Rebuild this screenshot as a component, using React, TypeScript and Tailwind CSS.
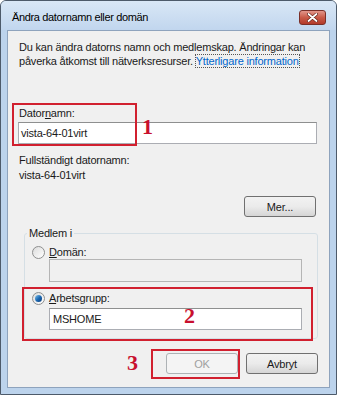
import React from "react";

const font = { fontFamily: '"Liberation Sans", Arial, sans-serif' };

function Radio({ checked }: { checked?: boolean }) {
  return (
    <div className="w-[13px] h-[13px] rounded-full border border-[#8e8f8f] bg-gradient-to-br from-[#dcdcdc] to-[#ffffff] flex items-center justify-center shrink-0">
      {checked && (
        <div className="w-[7px] h-[7px] rounded-full bg-gradient-to-br from-[#7fc4ea] via-[#1c6ab4] to-[#0d3d7a]" />
      )}
    </div>
  );
}

export default function App() {
  return (
    <div
      className="w-[337px] h-[395px] relative bg-[#bcd3ec] border border-[#4d5a6a] rounded-t-[6px] flex flex-col overflow-hidden text-[11px] tracking-[-0.2px] text-[#1a1a1a] whitespace-nowrap"
      style={font}
    >
      {/* title bar */}
      <div className="h-[29px] shrink-0 flex items-center justify-between pl-[11px] pr-[10px] bg-gradient-to-b from-[#d9e7f6] to-[#c1d6ee]">
        <span className="text-[11px] tracking-[-0.35px] text-black leading-none mt-[3px]">Ändra datornamn eller domän</span>
        <div className="w-[27px] h-[15px] mt-[3px] rounded-[3px] border border-[#7a2f28] bg-gradient-to-b from-[#e2958a] via-[#c95a48] to-[#b23a2a] flex items-center justify-center">
          <svg width="11" height="9" viewBox="0 0 11 9">
            <path d="M1.5 1 L9.5 8 M9.5 1 L1.5 8" stroke="#5a1a12" strokeWidth="3" strokeLinecap="round" />
            <path d="M1.5 1 L9.5 8 M9.5 1 L1.5 8" stroke="#ffffff" strokeWidth="1.8" strokeLinecap="round" />
          </svg>
        </div>
      </div>
      {/* body with side frames */}
      <div className="flex-1 flex px-[6px] pb-[6px]">
        <div className="flex-1 relative bg-[#f0f0f0] border border-[#8ea3bd] flex flex-col">
          <p className="mt-[9px] ml-[11px] leading-[14px]">
            Du kan ändra datorns namn och medlemskap. Ändringar kan
            <br />
            påverka åtkomst till nätverksresurser.{" "}
            <span className="text-[#0066cc] outline outline-1 outline-dotted outline-[#555]">Ytterligare information</span>
          </p>

          <div className="mt-[38px] ml-[11px] leading-[14px]">
            Dator<span className="underline">n</span>amn:
          </div>
          <div className="mt-[2px] ml-[10px] w-[299px] h-[22px] bg-white border border-[#abadb3] border-t-[#8e8f8f] flex items-center pl-[2px] leading-[14px]">
            vista-64-01virt
          </div>

          <div className="mt-[9px] ml-[11px] leading-[14px]">Fullständigt datornamn:</div>
          <div className="mt-[1px] ml-[11px] leading-[14px]">vista-64-01virt</div>

          <div className="mt-[14px] ml-[236px] w-[72px] h-[21px] rounded-[3px] border border-[#707070] bg-gradient-to-b from-[#f2f2f2] via-[#ebebeb] to-[#d5d5d5] flex items-center justify-center leading-[14px]">
            Mer...
          </div>

          <fieldset className="mt-[9px] ml-[16px] w-[294px] border border-[#d5dfe5] rounded-[3px] pb-[8px]">
            <legend className="ml-[2px] px-[2px] leading-[14px]">Medlem i</legend>
            <div className="mt-[5px] ml-[7px] flex items-center gap-[4px] leading-[14px]">
              <Radio />
              <span>
                <span className="underline">D</span>omän:
              </span>
            </div>
            <div className="ml-[24px] w-[253px] h-[23px] bg-[#f0f0f0] border border-[#b5b5b5]" />
            <div className="mt-[9px] ml-[7px] flex items-center gap-[4px] leading-[14px]">
              <Radio checked />
              <span>
                <span className="underline">A</span>rbetsgrupp:
              </span>
            </div>
            <div className="mt-[3px] ml-[24px] w-[253px] h-[22px] bg-white border border-[#abadb3] border-t-[#8e8f8f] flex items-center pl-[3px] leading-[14px]">
              MSHOME
            </div>
          </fieldset>

          <div className="mt-[14px] mr-[11px] flex justify-end gap-[8px]">
            <div className="w-[72px] h-[21px] rounded-[3px] border border-[#adb2b5] bg-[#f4f4f4] text-[#a0a0a0] flex items-center justify-center leading-[14px]">
              OK
            </div>
            <div className="w-[72px] h-[21px] rounded-[3px] border border-[#707070] bg-gradient-to-b from-[#f2f2f2] via-[#ebebeb] to-[#d5d5d5] flex items-center justify-center leading-[14px]">
              Avbryt
            </div>
          </div>

          {/* annotations */}
          <div className="absolute left-[4px] top-[72px] w-[125px] h-[43px] border-2 border-[#d1202f]" />
          <div className="absolute left-[134px] top-[84px] text-[22px] leading-[24px] font-bold text-[#c8102e]" style={{ fontFamily: '"Liberation Serif", serif' }}>1</div>
          <div className="absolute left-[14px] top-[256px] w-[291px] h-[54px] border-2 border-[#d1202f]" />
          <div className="absolute left-[176px] top-[273px] text-[22px] leading-[24px] font-bold text-[#c8102e]" style={{ fontFamily: '"Liberation Serif", serif' }}>2</div>
          <div className="absolute left-[143px] top-[318px] w-[89px] h-[30px] border-2 border-[#d1202f]" />
          <div className="absolute left-[119px] top-[320px] text-[22px] leading-[24px] font-bold text-[#c8102e]" style={{ fontFamily: '"Liberation Serif", serif' }}>3</div>
        </div>
      </div>
    </div>
  );
}
